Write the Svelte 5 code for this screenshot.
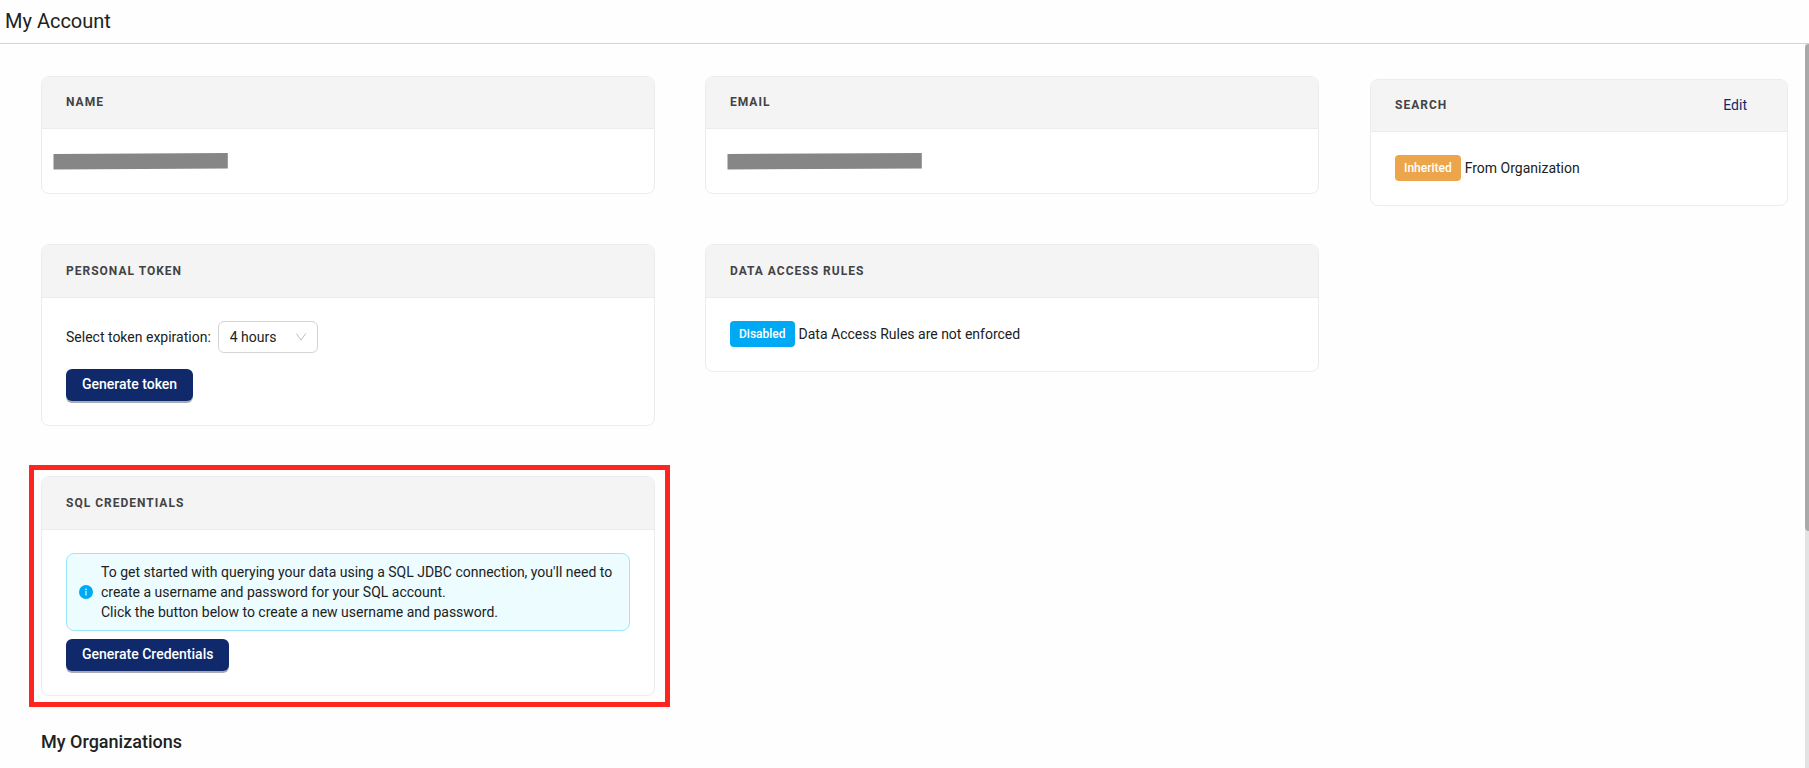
<script>
  const durations = ['1 hour', '4 hours', '8 hours', '24 hours'];
  let expiration = $state('4 hours');
</script>

<div class="page">
  <header class="topbar">
    <h1>My Account</h1>
  </header>

  <div class="viewport">
    <main>
      <div class="columns">
        <div class="cards">
          <section class="card">
            <h2 class="short">Name</h2>
            <div class="body name">
              <svg class="masked" width="175" height="17" viewBox="0 0 175 17" aria-hidden="true">
                <polygon points="0.500,1 174.800,0 174.800,15.500 0.500,16.500" />
              </svg>
            </div>
          </section>

          <section class="card">
            <h2 class="short">Email</h2>
            <div class="body email">
              <svg class="masked" width="195" height="17" viewBox="0 0 195 17" aria-hidden="true">
                <polygon points="0.500,1 194.800,0 194.800,15.500 0.500,16.500" />
              </svg>
            </div>
          </section>

          <section class="card">
            <h2>Personal Token</h2>
            <div class="body">
              <div class="field">
                <label for="expiration">Select token expiration:</label>
                <div class="select">
                  <select id="expiration" bind:value={expiration}>
                    {#each durations as duration}
                      <option value={duration}>{duration}</option>
                    {/each}
                  </select>
                  <svg class="chevron" width="12" height="12" viewBox="0 0 12 12" aria-hidden="true">
                    <path d="M1.200 2.500 6 9.200 10.800 2.500" />
                  </svg>
                </div>
              </div>
              <button class="primary" type="button">Generate token</button>
            </div>
          </section>

          <section class="card">
            <h2>Data Access Rules</h2>
            <div class="body status">
              <span class="tag info">Disabled</span>
              <span>Data Access Rules are not enforced</span>
            </div>
          </section>

          <div class="highlight">
            <section class="card">
              <h2>SQL Credentials</h2>
              <div class="body">
                <div class="alert">
                  <svg width="14" height="14" viewBox="0 0 14 14" aria-hidden="true">
                    <circle cx="7" cy="7" r="7" fill="#00a9f4" />
                    <circle cx="7" cy="4.300" r="0.850" fill="#ecfcff" />
                    <rect x="6.450" y="6" width="1.100" height="4.600" fill="#ecfcff" />
                  </svg>
                  <p>
                    To get started with querying your data using a SQL JDBC connection, you'll need to
                    create a username and password for your SQL account.<br />
                    Click the button below to create a new username and password.
                  </p>
                </div>
                <button class="primary" type="button">Generate Credentials</button>
              </div>
            </section>
          </div>
        </div>

        <aside>
          <section class="card">
            <h2 class="short">Search <a href="#search">Edit</a></h2>
            <div class="body status">
              <span class="tag warning">Inherited</span>
              <span>From Organization</span>
            </div>
          </section>
        </aside>
      </div>

      <h3>My Organizations</h3>
    </main>
    <div class="track"><div class="thumb"></div></div>
  </div>
</div>

<style>
  :global(body) {
    margin: 0;
    background: #fefefe;
  }

  .page {
    display: flex;
    flex-direction: column;
    height: 100vh;
    overflow: hidden;
    font: 14px/20px Roboto, sans-serif;
    color: #202122;
  }

  .page * {
    box-sizing: border-box;
  }

  .topbar {
    flex: none;
    padding: 6px 5px 7px;
    border-bottom: 1px solid #d3d4d4;
  }

  h1 {
    margin: 0;
    font-size: 20px;
    line-height: 30px;
    font-weight: 400;
  }

  .viewport {
    flex: 1;
    min-height: 0;
    display: flex;
  }

  main {
    flex: 1;
    min-width: 0;
    overflow: hidden;
    padding: 32px 17px 0 41px;
  }

  .columns {
    display: grid;
    grid-template-columns: 1278fr 418fr;
    gap: 51px;
  }

  .cards {
    display: grid;
    grid-template-columns: 1fr 1fr;
    align-items: start;
    gap: 50px;
  }

  aside {
    padding-top: 3px;
  }

  .card {
    border: 1px solid #ececec;
    border-radius: 8px;
    background: #fff;
    overflow: hidden;
  }

  h2 {
    display: flex;
    justify-content: space-between;
    align-items: center;
    min-height: 53px;
    margin: 0;
    padding: 0 24px;
    border-bottom: 1px solid #ececec;
    background: #f4f4f4;
    color: #424344;
    font-size: 12px;
    line-height: 20px;
    font-weight: 700;
    letter-spacing: 1px;
    text-transform: uppercase;
  }

  h2.short {
    min-height: 52px;
    padding-bottom: 1px;
  }

  h2 a {
    padding: 0 16px;
    color: #10296b;
    font-size: 14px;
    font-weight: 400;
    letter-spacing: normal;
    text-transform: none;
    text-decoration: none;
  }

  .body {
    padding: 23px 24px 24px;
  }

  .name,
  .email {
    padding-top: 24px;
    padding-bottom: 23px;
  }

  .name {
    padding-left: 11px;
  }

  .email {
    padding-left: 21px;
  }

  .masked {
    display: block;
    fill: #868686;
  }

  .field {
    display: flex;
    align-items: center;
    gap: 7px;
    margin-bottom: 16px;
  }

  .select {
    position: relative;
  }

  select {
    display: block;
    width: 100px;
    height: 32px;
    padding: 0 32px 0 11px;
    border: 1px solid #d3d4d4;
    border-radius: 6px;
    background: #fff;
    color: inherit;
    font: inherit;
    appearance: none;
  }

  .chevron {
    position: absolute;
    top: 10px;
    right: 11px;
    fill: none;
    stroke: #c0c0c0;
    pointer-events: none;
  }

  .primary {
    display: block;
    height: 32px;
    padding: 0 16px 2px;
    border: 0;
    border-radius: 6px;
    background: #10296b;
    box-shadow: 0 2px 0 #a6abb5;
    color: #fff;
    font: 500 14px/20px Roboto, sans-serif;
  }

  .status {
    display: flex;
    align-items: center;
    gap: 4px;
  }

  .tag {
    padding: 3px 9px;
    border-radius: 4px;
    color: #fff;
    font-size: 12px;
    font-weight: 500;
  }

  .info {
    background: #00a9f4;
  }

  .warning {
    background: #eca54b;
  }

  .highlight {
    position: relative;
  }

  .highlight::after {
    content: '';
    position: absolute;
    inset: -11px -15px -11px -12px;
    border: 5px solid #ff241f;
    pointer-events: none;
  }

  .alert {
    display: flex;
    align-items: center;
    gap: 8px;
    margin-bottom: 8px;
    padding: 8px 12px;
    border: 1px solid #98e8fa;
    border-radius: 8px;
    background: #ecfcff;
  }

  .alert svg {
    flex: none;
  }

  .alert p {
    margin: 0;
  }

  h3 {
    margin: 32px 0 0;
    font-size: 18px;
    line-height: 28px;
    font-weight: 500;
  }

  .track {
    flex: none;
    width: 4px;
    background: #e3e3e3;
  }

  .thumb {
    height: 67.3%;
    border-radius: 4px 0 0 4px;
    background: #a9a9a9;
  }
</style>
